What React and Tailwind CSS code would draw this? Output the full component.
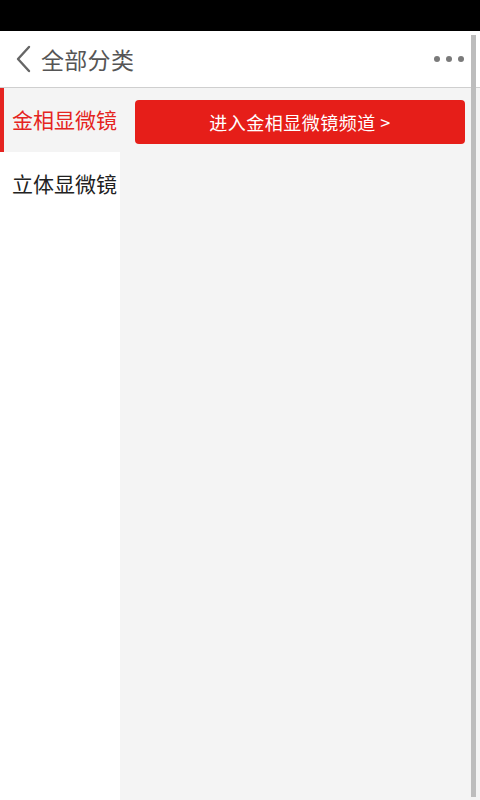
import React from "react";

export default function App() {
  const font = { fontFamily: '"Noto Sans CJK SC", "Noto Sans", sans-serif' };
  return (
    <div className="relative w-[480px] h-[800px] flex flex-col bg-white overflow-hidden" style={font}>
      <div className="h-[31px] bg-black shrink-0" />
      <div className="h-[57px] shrink-0 flex items-center border-b border-[#cfcfcf] bg-white">
        <svg width="18" height="28" viewBox="0 0 18 28" className="ml-[14px]">
          <path d="M15 2 L4 14 L15 26" fill="none" stroke="#666" strokeWidth="2.4" strokeLinecap="round" strokeLinejoin="round" />
        </svg>
        <span className="ml-[9px] text-[23px] leading-none text-[#555] tracking-[0.3px]">全部分类</span>
        <div className="ml-auto mr-[16px] flex gap-[6px]">
          <span className="w-[6px] h-[6px] rounded-full bg-[#7a7a7a]" />
          <span className="w-[6px] h-[6px] rounded-full bg-[#7a7a7a]" />
          <span className="w-[6px] h-[6px] rounded-full bg-[#7a7a7a]" />
        </div>
      </div>
      <div className="flex flex-1">
        <div className="w-[120px] shrink-0 flex flex-col bg-white">
          <div className="h-[64px] flex items-center bg-[#f4f4f4] border-l-[4px] border-[#e52421] pl-[8px]">
            <span className="text-[21px] text-[#e52421] whitespace-nowrap">金相显微镜</span>
          </div>
          <div className="h-[64px] flex items-center pl-[12px]">
            <span className="text-[21px] text-[#222] whitespace-nowrap">立体显微镜</span>
          </div>
        </div>
        <div className="flex-1 bg-[#f4f4f4] pt-[12px] pl-[15px] pr-[15px]">
          <div className="h-[44px] rounded-[4px] bg-[#e61e19] flex items-center justify-center text-white text-[18px] tracking-[0.5px]">
            进入金相显微镜频道 &gt;
          </div>
        </div>
      </div>
      <div className="absolute right-[4px] top-[35px] bottom-[3px] w-[5px] bg-[#bdbdbd]" />
    </div>
  );
}
